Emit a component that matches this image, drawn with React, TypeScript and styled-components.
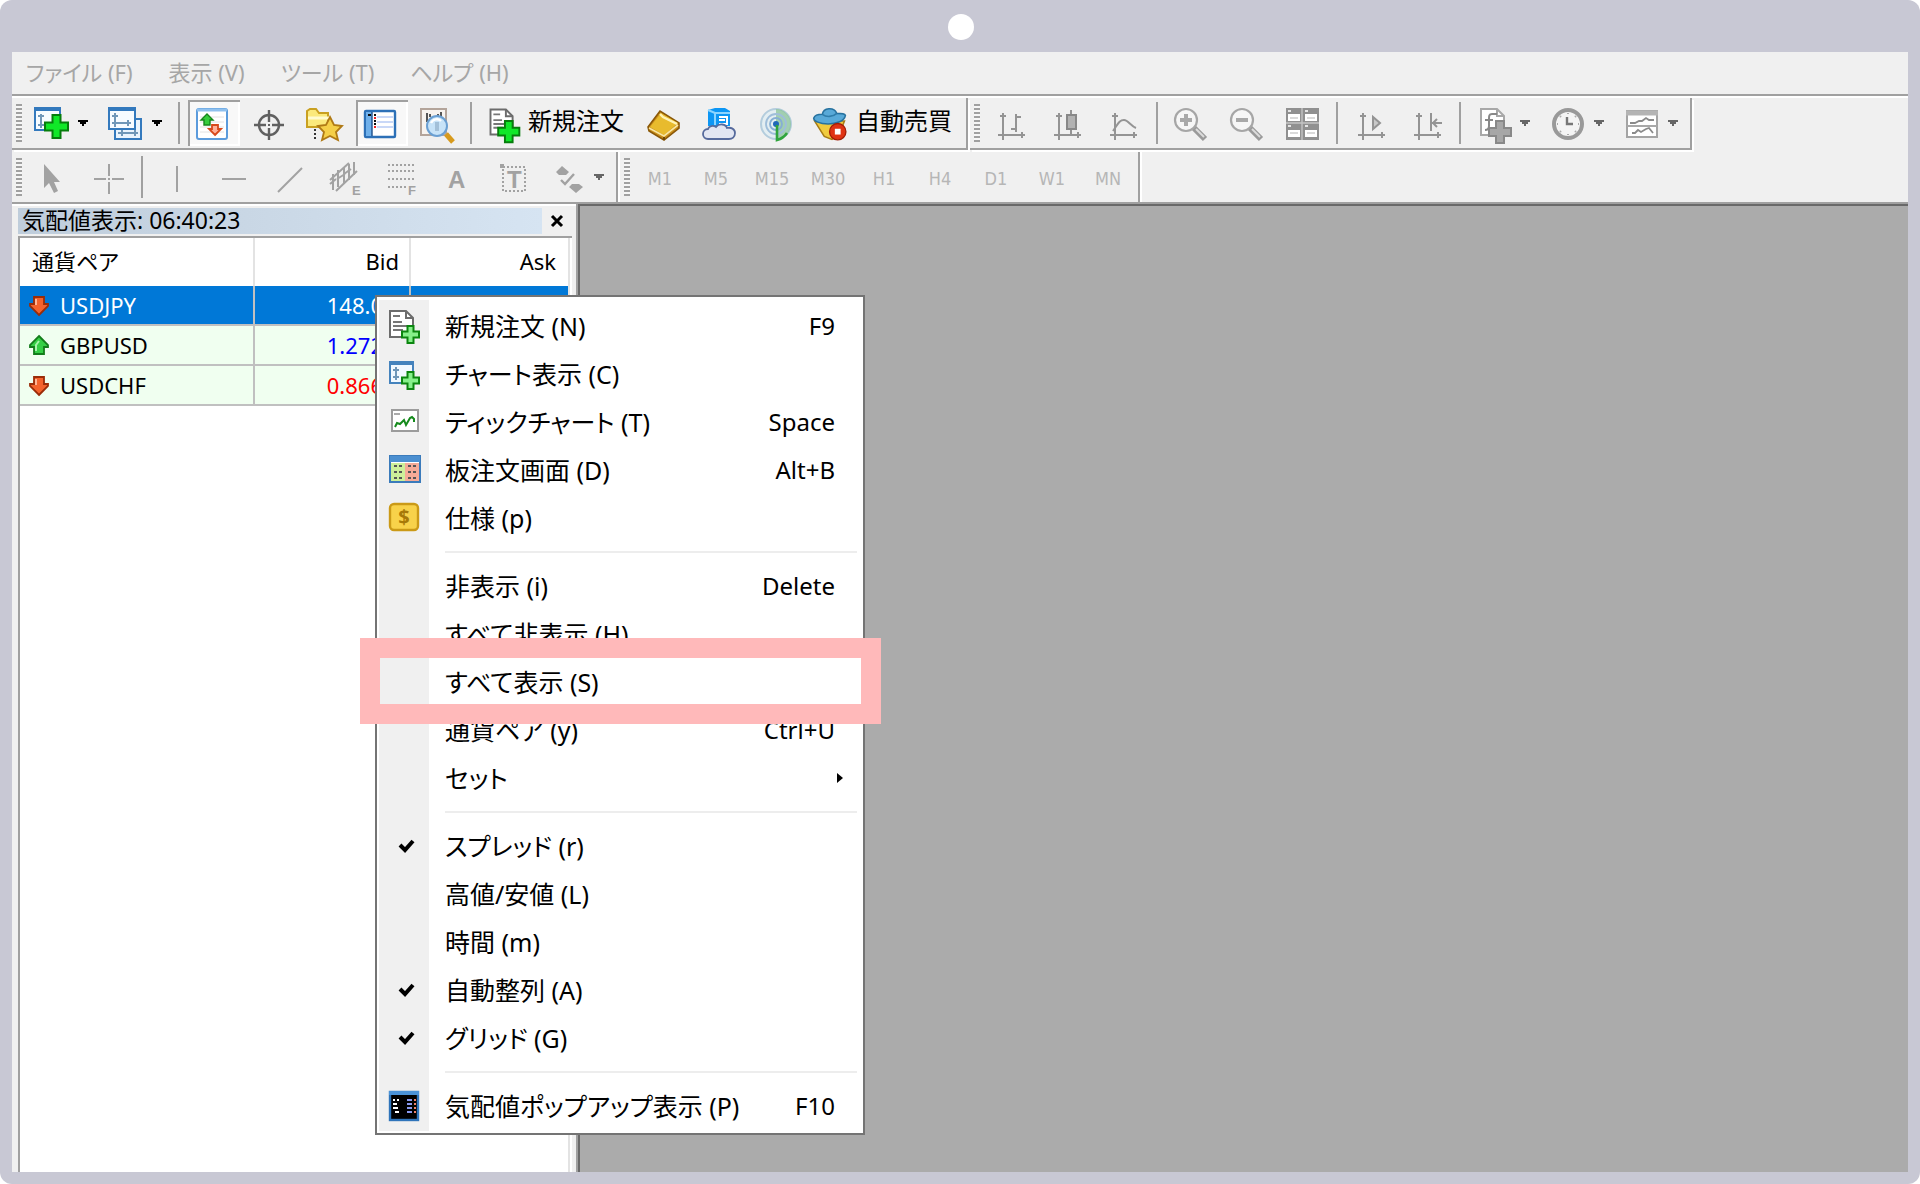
import React from "react";
import styled, { createGlobalStyle } from "styled-components";

const FONT = '"Noto Sans", "Noto Sans CJK JP", sans-serif';

const GlobalStyle = createGlobalStyle`
  *, *::before, *::after { box-sizing: border-box; }
  body {
    margin: 0;
    background: #ffffff;
    font-family: ${FONT};
    font-feature-settings: "palt";
    color: #000000;
  }
  button {
    margin: 0;
    padding: 0;
    border: 0;
    background: none;
    color: inherit;
    font: inherit;
    font-feature-settings: inherit;
    text-align: left;
  }
  svg { display: block; flex: none; overflow: visible; }
`;

/* ---------- shell ---------- */

const Tablet = styled.div`
  display: flex;
  flex-direction: column;
  min-height: 100vh;
  padding: 0 12px 12px;
  border-radius: 12px;
  background: #c8c8d4;
`;

const Bezel = styled.div`
  display: flex;
  align-items: center;
  justify-content: center;
  height: 52px;
  padding: 2px 0 0 2px;
`;

const Camera = styled.span`
  width: 26px;
  height: 26px;
  border-radius: 50%;
  background: #ffffff;
`;

const Terminal = styled.div`
  display: flex;
  flex: 1;
  flex-direction: column;
  background: #f0f0f0;
`;

const MenuBar = styled.nav`
  display: flex;
  align-items: center;
  gap: 36px;
  height: 44px;
  padding: 0 14px 2px;
  border-bottom: 2px solid #a0a0a0;
  box-shadow: 0 2px 0 #ffffff;
`;

const MenuBarButton = styled.button`
  color: #a6a6a6;
  font-size: 22px;
  line-height: 32px;
  white-space: nowrap;
`;

/* ---------- toolbars ---------- */

const ToolbarRow = styled.div<{ $full?: boolean }>`
  display: flex;
  height: 54px;
  padding-top: 2px;
  ${(p) => p.$full && "border-bottom: 2px solid #a0a0a0;"}
`;

const Band = styled.div<{ $lined?: boolean }>`
  display: flex;
  align-items: center;
  gap: 4px;
  height: ${(p) => (p.$lined ? 52 : 50)}px;
  margin-right: 2px;
  padding: 0 4px;
  border-right: 2px solid #a0a0a0;
  border-bottom: ${(p) => (p.$lined ? "2px solid #a0a0a0" : "0")};
  box-shadow: 2px ${(p) => (p.$lined ? "2px" : "0")} 0 #ffffff;
`;

const Grip = styled.span`
  flex: none;
  width: 6px;
  height: 38px;
  background: repeating-linear-gradient(#a0a0a0 0 2px, #f6f6f6 2px 4px);
`;

const Divider = styled.span<{ $space: number }>`
  flex: none;
  width: 2px;
  height: 42px;
  margin: 0 ${(p) => p.$space}px;
  background: #a0a0a0;
`;

const Tool = styled.button<{ $pressed?: boolean; $menu?: boolean }>`
  display: flex;
  align-items: center;
  height: 46px;
  padding-right: ${(p) => (p.$menu ? 8 : 0)}px;
  ${(p) =>
    p.$pressed &&
    `background: #f8f8f8;
     box-shadow: inset 2px 2px 0 #a0a0a0, inset -2px -2px 0 #ffffff;`}
`;

const LabelTool = styled.button`
  display: flex;
  align-items: center;
  height: 46px;
  padding-right: 10px;
  font-size: 24px;
  line-height: 36px;
  white-space: nowrap;

  & > svg { width: 50px; }
`;

const ToolLabel = styled.span`
  padding-bottom: 4px;
`;

const Timeframe = styled.button`
  width: 52px;
  height: 46px;
  padding-top: 2px;
  color: #b6b6b6;
  font-family: "DejaVu Sans Condensed", "DejaVu Sans", sans-serif;
  font-size: 18px;
  text-align: center;
`;

/* ---------- market watch ---------- */

const Workspace = styled.div`
  position: relative;
  display: flex;
  flex: 1;
`;

const Watch = styled.section`
  display: flex;
  flex-direction: column;
  width: 566px;
  padding: 2px 6px 0;
  border-top: 2px solid #ffffff;
`;

const WatchTitle = styled.header`
  display: flex;
  align-items: center;
  height: 26px;
`;

const WatchName = styled.h2`
  flex: 1;
  height: 26px;
  margin: 0;
  padding-left: 4px;
  background: linear-gradient(90deg, #bfcddb, #d6e4f2);
  font-size: 23px;
  font-weight: 400;
  line-height: 24px;
  white-space: nowrap;
`;

const CloseButton = styled.button`
  display: flex;
  align-items: center;
  justify-content: center;
  width: 30px;
  height: 26px;
`;

const WatchList = styled.div`
  flex: 1;
  margin-top: 2px;
  padding-right: 4px;
  border-top: 2px solid #a0a0a0;
  border-left: 2px solid #a0a0a0;
  background: #ffffff;
  box-shadow: inset -2px 0 0 #ffffff, inset -4px 0 0 #e3e3e3;
`;

const Quotes = styled.table`
  width: 100%;
  border-collapse: separate;
  border-spacing: 0;
  table-layout: fixed;
  font-size: 22px;
  line-height: 32px;
`;

const HeadCell = styled.th<{ $width?: number; $right?: boolean }>`
  width: ${(p) => (p.$width ? `${p.$width}px` : "auto")};
  height: 48px;
  padding: 0 10px 2px 12px;
  border-right: 2px solid #e3e3e3;
  font-weight: 400;
  text-align: ${(p) => (p.$right ? "right" : "left")};

  &:last-child {
    padding-right: 12px;
    border-right: 0;
  }
`;

const QuoteRow = styled.tr<{ $selected?: boolean }>`
  background: ${(p) => (p.$selected ? "#0078d7" : "#f0fff0")};
  color: ${(p) => (p.$selected ? "#ffffff" : "#000000")};
`;

const QuoteCell = styled.td<{ $color?: string }>`
  height: 40px;
  padding: 0 26px 0 0;
  border-right: 2px solid #c0c0c0;
  border-bottom: 2px solid #c0c0c0;
  color: ${(p) => p.$color || "inherit"};
  text-align: right;

  &:last-child { border-right: 0; }
`;

const Symbol = styled.div`
  display: flex;
  align-items: center;
  gap: 10px;
  padding-left: 8px;
`;

const ChartArea = styled.main`
  flex: 1;
  border-top: 2px solid #696969;
  border-left: 2px solid #696969;
  box-shadow: -2px 0 0 #a0a0a0;
  background: #ababab;
`;

/* ---------- context menu ---------- */

const ContextMenu = styled.div`
  position: absolute;
  top: 91px;
  left: 363px;
  width: 490px;
  padding: 3px 2px 2px;
  border: 2px solid #747474;
  background: #ffffff;
`;

const MenuList = styled.div`
  padding: 2px 0 1px;
  background: linear-gradient(90deg, #f0f0f0 50px, #ffffff 50px);
`;

const MenuItem = styled.button`
  position: relative;
  display: flex;
  align-items: center;
  width: 100%;
  height: 48px;
  padding-right: 26px;
  white-space: nowrap;
`;

const IconSlot = styled.span`
  flex: none;
  width: 66px;
  height: 48px;
`;

const ItemLabel = styled.span`
  flex: 1;
  font-size: 25px;
  line-height: 36px;
`;

const Shortcut = styled.span`
  font-size: 24px;
  line-height: 36px;
`;

const SubmenuArrow = styled.span`
  width: 6px;
  height: 10px;
  margin-right: -8px;
  background: #000000;
  clip-path: polygon(0 0, 100% 50%, 0 100%);
`;

const MenuRule = styled.hr`
  height: 2px;
  margin: 9px 4px 9px 66px;
  border: 0;
  background: #ededed;
`;

const Highlight = styled.span`
  position: absolute;
  z-index: 1;
  inset: -20px -20px -18px -19px;
  border: 20px solid #ffb9ba;
  pointer-events: none;
`;

/* ---------- icon helpers ---------- */

type IconProps = { children: React.ReactNode; h?: number };
const Icon = ({ children, h = 46 }: IconProps) => (
  <svg width={52} height={h} viewBox={`0 0 52 ${h}`} fill="none" aria-hidden="true">
    {children}
  </svg>
);

const Plus = ({ x, y, s, fill = "#10e828", line = "#067d0c" }: { x: number; y: number; s: number; fill?: string; line?: string }) => {
  const t = Math.round(s / 3);
  const m = (s - t) / 2;
  return (
    <path
      d={`M${x + m} ${y + 1}h${t}v${m - 1}h${m - 1}v${t}h${1 - m}v${m - 1}h${-t}v${1 - m}h${1 - m}v${-t}h${m - 1}z`}
      fill={fill}
      stroke={line}
      strokeWidth={2}
    />
  );
};

const Page = ({ x, y, gray }: { x: number; y: number; gray?: boolean }) => (
  <g>
    <path d={`M${x + 1} ${y + 1}h16l7 7v19h-23z`} fill="#fff" stroke={gray ? "#a8a8a8" : "#6c6c6c"} strokeWidth={2} />
    <path d={`M${x + 17} ${y + 1}v7h7`} stroke={gray ? "#a8a8a8" : "#6c6c6c"} strokeWidth={2} />
  </g>
);

const PageLines = ({ x, y }: { x: number; y: number }) => (
  <path
    d={`M${x + 4} ${y + 6}h7M${x + 4} ${y + 12}h9M${x + 4} ${y + 16}h14M${x + 4} ${y + 20}h10`}
    stroke="#777"
    strokeWidth={2}
  />
);

const DownArrow = ({ gray }: { gray?: boolean }) => (
  <svg width={10} height={6} viewBox="0 0 10 6" aria-hidden="true">
    <path d="M0 0h10v2H8v2H6v2H4V4H2V2H0z" fill={gray ? "#666" : "#000"} />
  </svg>
);

const Axes = ({ children, dx = 14 }: { children: React.ReactNode; dx?: number }) => (
  <Icon>
    <g transform={`translate(${dx} 12)`} stroke="#949494" strokeWidth={2}>
      <path d="M5 1v27M0 23h27M2 4h6M24 20v6" />
      {children}
    </g>
  </Icon>
);

/* ---------- toolbar icons ---------- */

const NewChartIcon = () => (
  <Icon>
    <rect x={9} y={9} width={25} height={21} fill="#f6fbff" stroke="#3379bd" strokeWidth={2} />
    <path d="M8 9h27" stroke="#3379bd" strokeWidth={4} />
    <path d="M15 14v14M12 16h6M12 25h14" stroke="#7097b8" strokeWidth={2} />
    <Plus x={18} y={14} s={25} />
  </Icon>
);

const ProfilesIcon = () => (
  <Icon>
    <rect x={15} y={19} width={26} height={20} fill="#eaf4fd" stroke="#3379bd" strokeWidth={2} />
    <path d="M18 33h20M22 30v6M35 30v6" stroke="#7097b8" strokeWidth={2} />
    <rect x={9} y={9} width={26} height={20} fill="#f6fbff" stroke="#3379bd" strokeWidth={2} />
    <path d="M8 9h28" stroke="#3379bd" strokeWidth={4} />
    <path d="M15 13v14M12 16h6M12 23h19M28 20v6" stroke="#7097b8" strokeWidth={2} />
  </Icon>
);

const WatchIcon = () => (
  <Icon>
    <rect x={9} y={9} width={30} height={30} rx={2} fill="#fff" stroke="#5b9bdc" strokeWidth={2} />
    <path d="M9 10h30" stroke="#8fc0ee" strokeWidth={3} />
    <path d="M12 17h24M12 22h24M12 27h24M12 32h24" stroke="#e2e2e2" strokeWidth={1} />
    <path d="M19 14l6 6h-3v5h-6v-5h-3z" fill="#35cc3c" stroke="#16861c" strokeWidth={1.4} />
    <path d="M27 35l6-6h-3v-4h-6v4h-3z" fill="#ffb09a" stroke="#d8491c" strokeWidth={1.8} />
  </Icon>
);

const CrosshairIcon = () => (
  <Icon>
    <circle cx={25} cy={25} r={10} stroke="#606060" strokeWidth={2.4} />
    <path d="M25 10v12M25 28v12M10 25h12M28 25h12" stroke="#606060" strokeWidth={2.4} />
    <path d="M24 25h2" stroke="#606060" strokeWidth={2} />
  </Icon>
);

const FavoritesIcon = () => (
  <Icon>
    <path d="M7 27V11l3-2h6l3 4h9v12l-4 2z" fill="#fbe97c" stroke="#c9a021" strokeWidth={2} />
    <path d="M8 18h21" stroke="#fffbd0" strokeWidth={3} />
    <path d="M15 29v12" stroke="#333" strokeWidth={2} strokeDasharray="2 2" />
    <path d="M30 17l4 8 8 1-6 6 2 8-8-4-8 4 2-8-6-6 8-1z" fill="#f5cf48" stroke="#b07a15" strokeWidth={1.8} />
  </Icon>
);

const NavigatorIcon = () => (
  <Icon>
    <rect x={9} y={11} width={30} height={26} rx={1} fill="#fff" stroke="#2c70b7" strokeWidth={2.4} />
    <rect x={10} y={12} width={6} height={24} fill="#6fb0ea" />
    <path d="M16 12v24" stroke="#1c4f8a" strokeWidth={1.4} />
    <path d="M21 17h16M21 22h16M21 27h16" stroke="#b8ccf5" strokeWidth={1.6} />
    <path d="M12 15h3M18 15h2M18 21h2M18 24h2" stroke="#111" strokeWidth={2} />
    <path d="M18 18h2M18 27h2" stroke="#f02020" strokeWidth={2} />
  </Icon>
);

const TesterIcon = () => (
  <Icon>
    <rect x={9} y={9} width={25} height={26} fill="#f7f3ef" stroke="#b3a49a" strokeWidth={2} />
    <path d="M15 13v9M18 14v3M29 12v6M26 14v3" stroke="#555" strokeWidth={2} />
    <path d="M34 34l7 8" stroke="#d79a1c" strokeWidth={5} />
    <circle cx={25} cy={26} r={10} fill="#c7e3f8" stroke="#6a9fd2" strokeWidth={2} />
    <path d="M19 23c2-4 7-5 10-2" stroke="#fff" strokeWidth={2.4} />
    <path d="M25 22v9" stroke="#a3c0d8" strokeWidth={4} />
  </Icon>
);

const OrderIcon = () => (
  <Icon>
    <Page x={12} y={8} />
    <PageLines x={12} y={8} />
    <Plus x={20} y={20} s={24} />
  </Icon>
);

const BookIcon = () => (
  <Icon>
    <path d="M10 27L22 11l19 12v5L26 40 11 31z" fill="#c98d18" stroke="#8a5808" strokeWidth={1.6} />
    <path d="M12 27l11-14 17 10-14 12z" fill="#e8bb2d" />
    <path d="M22 14l3 3 14 7" stroke="#fff3b4" strokeWidth={2.4} />
    <path d="M11 28l15 8 14-11" stroke="#f8e6a2" strokeWidth={1.6} />
    <path d="M26 37v3" stroke="#704806" strokeWidth={2} />
  </Icon>
);

const CloudServerIcon = () => (
  <Icon>
    <path d="M14 10l7-2h10l5 3v15H14z" fill="#0c96f4" />
    <path d="M14 10l7 3v12M21 13h15" stroke="#8ad4ff" strokeWidth={2} />
    <path d="M25 17h8v7h-8M25 20h6" stroke="#fff" strokeWidth={2} />
    <path d="M14 39a5 5 0 0 1 0-10c1-3 5-4 8-2 3-4 10-3 11 1 4-1 8 1 8 5s-3 6-6 6z" fill="#e2e6f2" stroke="#566a9c" strokeWidth={1.8} />
  </Icon>
);

const SignalIcon = () => (
  <Icon>
    <circle cx={26} cy={24} r={15} fill="#e3eef2" stroke="#b4cddd" strokeWidth={2} />
    <path d="M26 9a15 15 0 0 1 0 30z" fill="#8cc49a" opacity={0.75} />
    <circle cx={26} cy={24} r={10} stroke="#9fbeda" strokeWidth={1.8} />
    <circle cx={26} cy={24} r={6} stroke="#86aed4" strokeWidth={1.8} />
    <circle cx={26} cy={24} r={3} fill="#1f68b8" />
    <path d="M27 25v15c4-1 8-4 10-7" stroke="#2fa53c" strokeWidth={2.6} />
  </Icon>
);

const AutoTradeIcon = () => (
  <Icon>
    <path d="M9 21h31l-6 15-7 4-8-3z" fill="#f0cb3e" stroke="#a87c14" strokeWidth={1.6} />
    <path d="M8 18c1-3 6-4 9-4 1-7 12-8 15-1 4 0 8 0 9 2-1 6-9 9-18 9S8 21 8 18z" fill="#58a9d8" stroke="#27729f" strokeWidth={1.6} />
    <path d="M17 14c4 3 11 3 15-1" stroke="#2f7dab" strokeWidth={1.6} />
    <circle cx={33} cy={32} r={8.5} fill="#e03414" stroke="#a31d06" strokeWidth={1.4} />
    <rect x={30} y={29} width={6} height={6} fill="#fff" />
  </Icon>
);

const BarsIcon = () => (
  <Axes>
    <path d="M18 2v18M18 5h5M13 17h5" />
  </Axes>
);

const CandlesIcon = () => (
  <Axes>
    <path d="M17-2v24" />
    <rect x={13} y={3} width={9} height={14} fill="#b2b2b2" stroke="#888" />
  </Axes>
);

const LineIcon = () => (
  <Axes>
    <path d="M3 19C8 12 9 8 14 8c4 0 7 6 12 8" />
  </Axes>
);

const ScrollIcon = () => (
  <Axes>
    <path d="M15 5v12l7-6z" fill="#c9c9c9" />
  </Axes>
);

const ShiftIcon = () => (
  <Axes>
    <path d="M17 1v18M18 11h10M23 7l-4 4 4 4" />
  </Axes>
);

const ZoomIcon = ({ plus }: { plus?: boolean }) => (
  <Icon>
    <path d="M28 28l11 11" stroke="#9a9a9a" strokeWidth={6} />
    <path d="M30 29l8 8" stroke="#dcdcdc" strokeWidth={2} />
    <circle cx={20} cy={20} r={11} fill="#f6f6f6" stroke="#a6a6a6" strokeWidth={2.2} />
    <path d={plus ? "M14 20h12M20 14v12" : "M14 20h12"} stroke="#a8a8a8" strokeWidth={4} />
  </Icon>
);

const TileIcon = () => (
  <Icon>
    <rect x={8} y={8} width={33} height={32} fill="#909090" />
    <path d="M24 8v32M8 23h33" stroke="#c4c4c4" strokeWidth={1.4} />
    <path d="M10 14h12v7H10zM27 14h12v7H27zM10 30h12v7H10zM27 30h12v7H27z" fill="#fff" />
    <path d="M12 18h8M29 18h8M12 33h8M29 33h8" stroke="#dadada" strokeWidth={2} />
    <path d="M10 11h3M27 11h3M10 26h3M27 26h3" stroke="#e6e6e6" strokeWidth={2} />
  </Icon>
);

const IndicatorsIcon = () => (
  <Icon>
    <Page x={12} y={8} gray />
    <path d="M29 14h-5c-3 0-3 2-3 5v7c0 3-1 4-4 4M17 20h8" stroke="#888" strokeWidth={2} />
    <Plus x={20} y={20} s={24} fill="#a6a6a6" line="#888" />
  </Icon>
);

const ClockIcon = () => (
  <Icon>
    <circle cx={26} cy={24} r={14} fill="#f4f4f4" stroke="#999" strokeWidth={4} />
    <path d="M25 17v7h6" stroke="#777" strokeWidth={2.4} />
    <path d="M26 13v1M26 34v1M15 24h1M36 24h1M18 16l1 1M18 32l1-1M34 32l-1-1M34 16l-1 1" stroke="#aaa" strokeWidth={2} />
  </Icon>
);

const TemplateIcon = () => (
  <Icon>
    <rect x={11} y={11} width={30} height={26} fill="#fff" stroke="#a4a4a4" strokeWidth={2} />
    <path d="M10 13h32" stroke="#b4b4b4" strokeWidth={5} />
    <path d="M11 26h30" stroke="#a8a8a8" strokeWidth={2} />
    <path d="M14 23h5l4-2h3l4-3 3 2h5M16 33h3l3-3 3 2 5-3 3-1 4 5" stroke="#8a8a8a" strokeWidth={1.8} />
  </Icon>
);

/* ---------- drawing tool icons ---------- */

const GRAY = "#a2a2a2";

const CursorIcon = () => (
  <Icon>
    <path d="M18 10v24l5-5 5 10 4-2-4-9h6z" fill={GRAY} />
  </Icon>
);
const CrossIcon = () => (
  <Icon>
    <path d="M27 10v12M27 28v12M12 25h12M30 25h12M26 25h2" stroke={GRAY} strokeWidth={2} />
  </Icon>
);
const VLineIcon = () => (
  <Icon>
    <path d="M27 12v26" stroke={GRAY} strokeWidth={2} />
  </Icon>
);
const HLineIcon = () => (
  <Icon>
    <path d="M16 25h24" stroke={GRAY} strokeWidth={2} />
  </Icon>
);
const TrendIcon = () => (
  <Icon>
    <path d="M16 38l24-24" stroke={GRAY} strokeWidth={2} />
  </Icon>
);
const Letter = styled.text`
  font-family: "Liberation Sans", sans-serif;
  font-weight: 700;
  fill: #a2a2a2;
`;
const ChannelIcon = () => (
  <Icon>
    <path d="M12 26l19-17M18 37l21-20M15 20v16M20 16v17M26 14v15M31 10v16M36 8v13M12 30l6-5M19 25l8-5M26 20l7-5" stroke={GRAY} strokeWidth={2} />
    <Letter x={34} y={41} fontSize={13}>E</Letter>
  </Icon>
);
const FiboIcon = () => (
  <Icon>
    <path d="M14 11h27M14 17h27M14 25h27M14 33h18" stroke={GRAY} strokeWidth={2} strokeDasharray="2 2" />
    <Letter x={34} y={41} fontSize={13}>F</Letter>
  </Icon>
);
const TextIcon = () => (
  <Icon>
    <Letter x={18} y={34} fontSize={24}>A</Letter>
  </Icon>
);
const LabelIcon = () => (
  <Icon>
    <rect x={17} y={13} width={22} height={24} stroke={GRAY} strokeWidth={2} strokeDasharray="2 2" />
    <rect x={14} y={10} width={4} height={4} fill={GRAY} />
    <Letter x={21} y={34} fontSize={24}>T</Letter>
  </Icon>
);
const ArrowsIcon = () => (
  <Icon>
    <path d="M20 12l7 6-3 3h-7l-3-3zM34 39l-7-6 3-3h7l4 3z" fill={GRAY} />
    <path d="M19 26l4 4 9-10" stroke={GRAY} strokeWidth={2.4} />
  </Icon>
);

/* ---------- context menu icons ---------- */

const LIGHT_GREEN = "#86f08a";

const MenuOrderIcon = () => (
  <Icon h={48}>
    <Page x={10} y={8} />
    <PageLines x={10} y={8} />
    <Plus x={22} y={23} s={19} fill={LIGHT_GREEN} line="#0b860f" />
  </Icon>
);
const MenuChartIcon = () => (
  <Icon h={48}>
    <rect x={11} y={12} width={23} height={21} fill="#f2f9ff" stroke="#4583bd" strokeWidth={2} />
    <path d="M10 13h25" stroke="#4583bd" strokeWidth={4} />
    <path d="M17 17v13M14 20h6M14 27h6" stroke="#7097b8" strokeWidth={2} />
    <Plus x={22} y={21} s={19} fill={LIGHT_GREEN} line="#0b860f" />
  </Icon>
);
const MenuTickIcon = () => (
  <Icon h={48}>
    <rect x={13} y={12} width={26} height={21} fill="#fff" stroke="#9c9c9c" strokeWidth={2} />
    <path d="M15 16h6" stroke="#aaa" strokeWidth={2} />
    <path d="M16 29l2-4 3 1 4-4 2 5 4-7 2-1 2 2v3" stroke="#158a1c" strokeWidth={2} />
  </Icon>
);
const MenuDepthIcon = () => (
  <Icon h={48}>
    <rect x={11} y={10} width={30} height={26} fill="#fff" stroke="#3b7bbb" strokeWidth={2} />
    <path d="M11 13h30" stroke="#4b8fd0" strokeWidth={6} />
    <rect x={12} y={17} width={14} height={18} fill="#cdf09a" />
    <rect x={26} y={17} width={14} height={18} fill="#f5ab98" />
    <path d="M15 20h8M15 26h8M15 32h8M29 20h8M29 26h8M29 32h8" stroke="#555" strokeWidth={2} strokeDasharray="3 2" />
  </Icon>
);
const Dollar = styled.text`
  font-family: "Noto Sans", sans-serif;
  font-weight: 700;
  fill: #a77908;
`;
const MenuSpecIcon = () => (
  <Icon h={48}>
    <rect x={11} y={10} width={28} height={26} rx={4} fill="#f8d24a" stroke="#cb9a17" strokeWidth={2.4} />
    <Dollar x={25} y={30} fontSize={20} textAnchor="middle">$</Dollar>
  </Icon>
);
const MenuPopupIcon = () => (
  <Icon h={48}>
    <rect x={11} y={10} width={28} height={28} fill="#000" stroke="#2f74ba" strokeWidth={2.4} />
    <path d="M10 11h30" stroke="#4b93d8" strokeWidth={4} />
    <path d="M14 18h2M18 18h2M14 22h4M14 26h5M16 30h4" stroke="#fff" strokeWidth={2} />
    <path d="M28 18h5M28 22h5M28 26h5M28 30h5" stroke="#8a9af0" strokeWidth={2} />
    <path d="M35 18h2M35 22h2M35 26h2M35 30h2" stroke="#f08068" strokeWidth={2} />
  </Icon>
);
const CheckIcon = () => (
  <Icon h={48}>
    <path d="M21 23l5 5 8-9" stroke="#000" strokeWidth={4} />
  </Icon>
);

const Trend = ({ up }: { up?: boolean }) => (
  <svg width={22} height={22} viewBox="0 0 22 22" aria-hidden="true">
    {up ? (
      <path d="M11 2l9 9v2h-4v7H6v-7H2v-2z" fill="#35cf45" stroke="#137d1b" strokeWidth={1.8} />
    ) : (
      <path d="M11 21l9-9v-2h-4V3H6v7H2v2z" fill="#f4622c" stroke="#9a2c08" strokeWidth={1.8} />
    )}
    <path d={up ? "M8 17v-6l3-4" : "M8 5v6"} stroke={up ? "#a6f5ab" : "#ffb596"} strokeWidth={2} fill="none" />
  </svg>
);

/* ---------- data ---------- */

const menus = ["ファイル (F)", "表示 (V)", "ツール (T)", "ヘルプ (H)"];
const timeframes = ["M1", "M5", "M15", "M30", "H1", "H4", "D1", "W1", "MN"];

const quotes = [
  { symbol: "USDJPY", bid: "148.0", up: false, selected: true, color: "#ffffff" },
  { symbol: "GBPUSD", bid: "1.272", up: true, selected: false, color: "#0000ff" },
  { symbol: "USDCHF", bid: "0.866", up: false, selected: false, color: "#ff0000" },
];

type Item = {
  label: string;
  keys?: string;
  icon?: React.ReactNode;
  submenu?: boolean;
  marked?: boolean;
};

const groups: Item[][] = [
  [
    { label: "新規注文 (N)", keys: "F9", icon: <MenuOrderIcon /> },
    { label: "チャート表示 (C)", icon: <MenuChartIcon /> },
    { label: "ティックチャート (T)", keys: "Space", icon: <MenuTickIcon /> },
    { label: "板注文画面 (D)", keys: "Alt+B", icon: <MenuDepthIcon /> },
    { label: "仕様 (p)", icon: <MenuSpecIcon /> },
  ],
  [
    { label: "非表示 (i)", keys: "Delete" },
    { label: "すべて非表示 (H)" },
    { label: "すべて表示 (S)", marked: true },
    { label: "通貨ペア (y)", keys: "Ctrl+U" },
    { label: "セット", submenu: true },
  ],
  [
    { label: "スプレッド (r)", icon: <CheckIcon /> },
    { label: "高値/安値 (L)" },
    { label: "時間 (m)" },
    { label: "自動整列 (A)", icon: <CheckIcon /> },
    { label: "グリッド (G)", icon: <CheckIcon /> },
  ],
  [{ label: "気配値ポップアップ表示 (P)", keys: "F10", icon: <MenuPopupIcon /> }],
];

export default function App() {
  return (
    <>
      <GlobalStyle />
      <Tablet>
        <Bezel>
          <Camera />
        </Bezel>
        <Terminal>
          <MenuBar>
            {menus.map((m) => (
              <MenuBarButton key={m}>{m}</MenuBarButton>
            ))}
          </MenuBar>

          <ToolbarRow>
            <Band $lined>
              <Grip />
              <Tool $menu><NewChartIcon /><DownArrow /></Tool>
              <Tool $menu><ProfilesIcon /><DownArrow /></Tool>
              <Divider $space={4} />
              <Tool $pressed><WatchIcon /></Tool>
              <Tool><CrosshairIcon /></Tool>
              <Tool><FavoritesIcon /></Tool>
              <Tool $pressed><NavigatorIcon /></Tool>
              <Tool><TesterIcon /></Tool>
              <Divider $space={2} />
              <LabelTool><OrderIcon /><ToolLabel>新規注文</ToolLabel></LabelTool>
              <Tool><BookIcon /></Tool>
              <Tool><CloudServerIcon /></Tool>
              <Tool><SignalIcon /></Tool>
              <LabelTool><AutoTradeIcon /><ToolLabel>自動売買</ToolLabel></LabelTool>
            </Band>
            <Band $lined>
              <Grip />
              <Tool><BarsIcon /></Tool>
              <Tool><CandlesIcon /></Tool>
              <Tool><LineIcon /></Tool>
              <Divider $space={4} />
              <Tool><ZoomIcon plus /></Tool>
              <Tool><ZoomIcon /></Tool>
              <Tool><TileIcon /></Tool>
              <Divider $space={2} />
              <Tool><ScrollIcon /></Tool>
              <Tool><ShiftIcon /></Tool>
              <Divider $space={3} />
              <Tool $menu><IndicatorsIcon /><DownArrow gray /></Tool>
              <Tool $menu><ClockIcon /><DownArrow gray /></Tool>
              <Tool $menu><TemplateIcon /><DownArrow gray /></Tool>
            </Band>
          </ToolbarRow>

          <ToolbarRow $full>
            <Band>
              <Grip />
              <Tool><CursorIcon /></Tool>
              <Tool><CrossIcon /></Tool>
              <Divider $space={3} />
              <Tool><VLineIcon /></Tool>
              <Tool><HLineIcon /></Tool>
              <Tool><TrendIcon /></Tool>
              <Tool><ChannelIcon /></Tool>
              <Tool><FiboIcon /></Tool>
              <Tool><TextIcon /></Tool>
              <Tool><LabelIcon /></Tool>
              <Tool $menu><ArrowsIcon /><DownArrow gray /></Tool>
            </Band>
            <Band>
              <Grip />
              {timeframes.map((t) => (
                <Timeframe key={t}>{t}</Timeframe>
              ))}
            </Band>
          </ToolbarRow>

          <Workspace>
            <Watch>
              <WatchTitle>
                <WatchName>気配値表示: 06:40:23</WatchName>
                <CloseButton aria-label="閉じる">
                  <svg width={12} height={10} viewBox="0 0 12 10" aria-hidden="true">
                    <path d="M1 0l10 10M11 0L1 10" stroke="#000" strokeWidth={3} />
                  </svg>
                </CloseButton>
              </WatchTitle>
              <WatchList>
                <Quotes>
                  <thead>
                    <tr>
                      <HeadCell $width={235}>通貨ペア</HeadCell>
                      <HeadCell $width={156} $right>Bid</HeadCell>
                      <HeadCell $right>Ask</HeadCell>
                    </tr>
                  </thead>
                  <tbody>
                    {quotes.map((q) => (
                      <QuoteRow key={q.symbol} $selected={q.selected}>
                        <QuoteCell>
                          <Symbol>
                            <Trend up={q.up} />
                            {q.symbol}
                          </Symbol>
                        </QuoteCell>
                        <QuoteCell $color={q.color}>{q.bid}</QuoteCell>
                        <QuoteCell />
                      </QuoteRow>
                    ))}
                  </tbody>
                </Quotes>
              </WatchList>
            </Watch>
            <ChartArea />

            <ContextMenu role="menu">
              <MenuList>
                {groups.map((group, i) => (
                  <React.Fragment key={i}>
                    {i > 0 && <MenuRule />}
                    {group.map((item) => (
                      <MenuItem key={item.label} role="menuitem">
                        <IconSlot>{item.icon}</IconSlot>
                        <ItemLabel>{item.label}</ItemLabel>
                        {item.keys && <Shortcut>{item.keys}</Shortcut>}
                        {item.submenu && <SubmenuArrow />}
                        {item.marked && <Highlight />}
                      </MenuItem>
                    ))}
                  </React.Fragment>
                ))}
              </MenuList>
            </ContextMenu>
          </Workspace>
        </Terminal>
      </Tablet>
    </>
  );
}
